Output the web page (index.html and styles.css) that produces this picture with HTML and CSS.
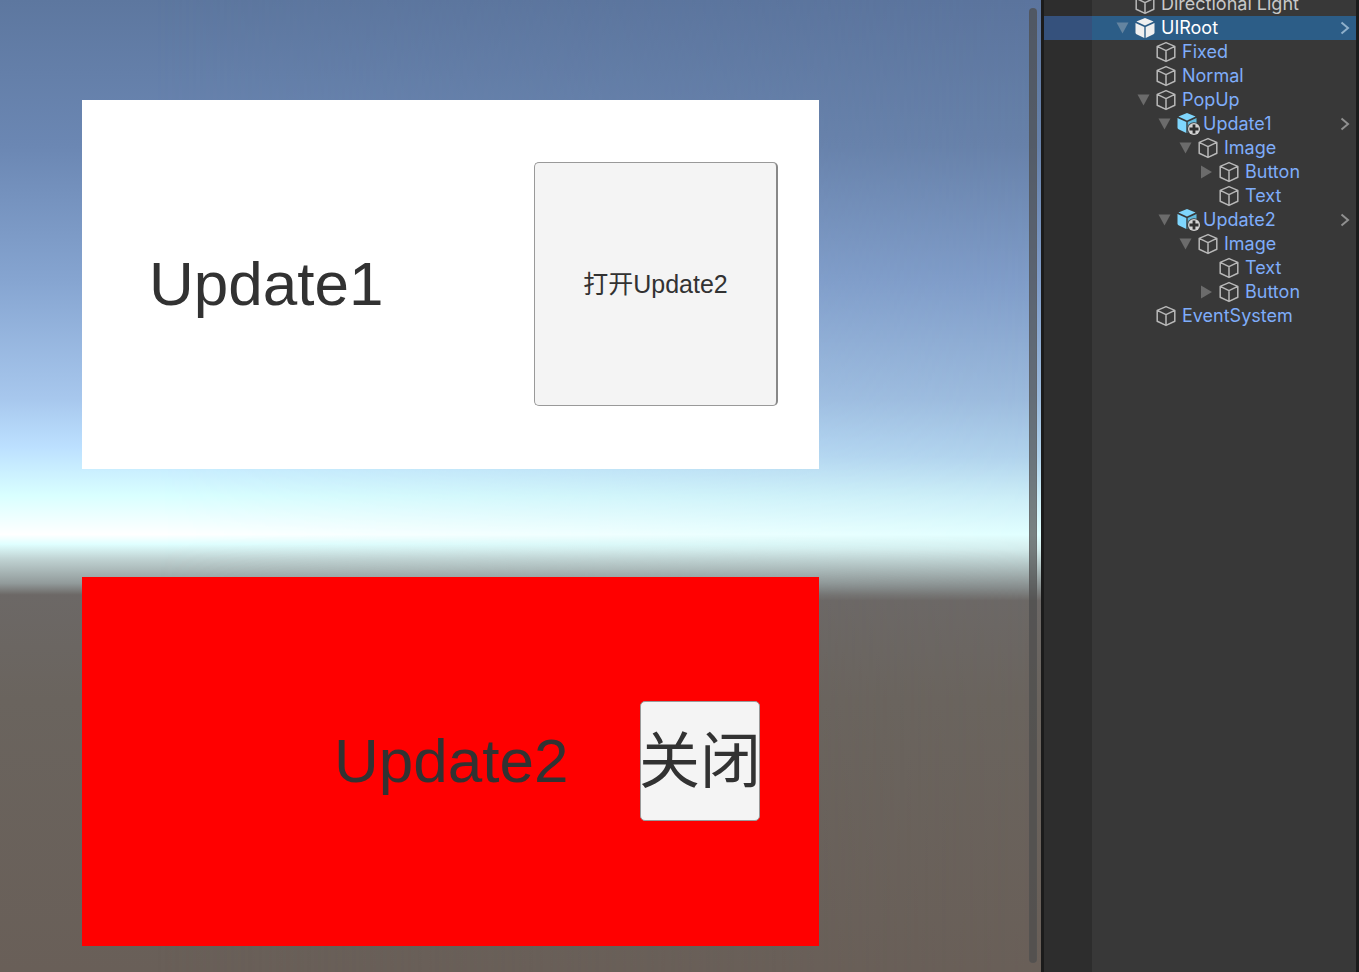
FILE: index.html
```
<!DOCTYPE html>
<html lang="zh-CN">
<head>
<meta charset="utf-8">
<title>UIRoot</title>
<link rel="stylesheet" href="styles.css">
</head>
<body>
<svg class="defs" aria-hidden="true">
  <symbol id="cube" viewBox="0 0 20 22"><path d="M10 1.6 18.8 5.4V16.2L10 20.4 1.2 16.2V5.4ZM1.2 5.4 10 9.6 18.8 5.4M10 9.6V20.4" fill="none" stroke="currentColor" stroke-width="1.5" stroke-linejoin="round"/></symbol>
  <symbol id="solid" viewBox="0 0 20 22"><path d="M10 1 18.6 4.6 10 8.5 1.4 4.6ZM.5 6.1 9.3 10V21L1.5 17.2Q.5 16.7.5 15.8ZM19.5 6.1 10.7 10V21L18.5 17.2Q19.5 16.7 19.5 15.8Z" fill="currentColor"/></symbol>
  <symbol id="prefab" viewBox="0 0 24 24"><path d="M10 1 18.6 4.6 10 8.5 1.4 4.6ZM.5 6.1 9.3 10V21L1.5 17.2Q.5 16.7.5 15.8Z" fill="#7fd6fd"/><path d="M19.5 6.1 10.7 10V21L18.5 17.2Q19.5 16.7 19.5 15.8Z" fill="#62b9dc"/><circle cx="17" cy="17" r="6.8" fill="#383838"/><circle cx="17" cy="17" r="6" fill="#d2d2d2"/><path d="M17 12.5v9M12.5 17h9" stroke="#303030" stroke-width="2.8"/></symbol>
  <symbol id="down" viewBox="0 0 12 12"><path d="M0 .5H12L6 11.5Z" fill="currentColor"/></symbol>
  <symbol id="right" viewBox="0 0 12 14"><path d="M.5.5 11.5 7 .5 13.5Z" fill="currentColor"/></symbol>
  <symbol id="chev" viewBox="0 0 10 14"><path d="M1.5 1.5 8 7 1.5 12.5" fill="none" stroke="currentColor" stroke-width="2"/></symbol>
</svg>
<div class="editor">
  <main class="scene">
    <section class="popup popup-one">
      <h1 class="title">Update1</h1>
      <button class="ui-button open">打开Update2</button>
    </section>
    <section class="popup popup-two">
      <h1 class="title">Update2</h1>
      <button class="ui-button close">关闭</button>
    </section>
    <div class="scroll"></div>
  </main>
  <nav class="hierarchy">
    <ul class="tree">
      <li class="row plain"><span class="slot"></span><svg class="icon"><use href="#cube"/></svg><span class="name">Directional Light</span></li>
      <li class="row selected"><button class="slot" aria-label="UIRoot"><svg class="down"><use href="#down"/></svg></button><svg class="icon"><use href="#solid"/></svg><span class="name">UIRoot</span><svg class="chev"><use href="#chev"/></svg></li>
      <li class="row l1"><span class="slot"></span><svg class="icon"><use href="#cube"/></svg><span class="name">Fixed</span></li>
      <li class="row l1"><span class="slot"></span><svg class="icon"><use href="#cube"/></svg><span class="name">Normal</span></li>
      <li class="row l1"><button class="slot" aria-label="PopUp"><svg class="down"><use href="#down"/></svg></button><svg class="icon"><use href="#cube"/></svg><span class="name">PopUp</span></li>
      <li class="row l2"><button class="slot" aria-label="Update1"><svg class="down"><use href="#down"/></svg></button><svg class="icon prefab"><use href="#prefab"/></svg><span class="name">Update1</span><svg class="chev"><use href="#chev"/></svg></li>
      <li class="row l3"><button class="slot" aria-label="Image"><svg class="down"><use href="#down"/></svg></button><svg class="icon"><use href="#cube"/></svg><span class="name">Image</span></li>
      <li class="row l4"><button class="slot" aria-label="Button"><svg class="right"><use href="#right"/></svg></button><svg class="icon"><use href="#cube"/></svg><span class="name">Button</span></li>
      <li class="row l4"><span class="slot"></span><svg class="icon"><use href="#cube"/></svg><span class="name">Text</span></li>
      <li class="row l2"><button class="slot" aria-label="Update2"><svg class="down"><use href="#down"/></svg></button><svg class="icon prefab"><use href="#prefab"/></svg><span class="name">Update2</span><svg class="chev"><use href="#chev"/></svg></li>
      <li class="row l3"><button class="slot" aria-label="Image"><svg class="down"><use href="#down"/></svg></button><svg class="icon"><use href="#cube"/></svg><span class="name">Image</span></li>
      <li class="row l4"><span class="slot"></span><svg class="icon"><use href="#cube"/></svg><span class="name">Text</span></li>
      <li class="row l4"><button class="slot" aria-label="Button"><svg class="right"><use href="#right"/></svg></button><svg class="icon"><use href="#cube"/></svg><span class="name">Button</span></li>
      <li class="row l1"><span class="slot"></span><svg class="icon"><use href="#cube"/></svg><span class="name">EventSystem</span></li>
    </ul>
  </nav>
</div>
</body>
</html>
```
FILE: styles.css
```
* { box-sizing: border-box; }
body { margin: 0; background: #1b1b1b; overflow: hidden; }
.defs { position: absolute; width: 0; height: 0; }
button { font: inherit; color: inherit; padding: 0; border: 0; background: none; }

.editor { display: flex; height: 100vh; }

.scene {
  position: relative;
  isolation: isolate;
  flex: 1;
  display: flex;
  flex-direction: column;
  gap: 108px;
  padding: 100px 222px 0 82px;
  background: linear-gradient(#5d779f 0, #6b87b3 15%, #86a5d1 29%, #a7c7ed 41%, #bce0ff 46%, #d9ffff 51%, #fff 55%, #dfffff 56%, #c0d3d3 57.5%, #929b9b 60%, #6c6866 61.2%, #6a645e 72%, #695f58 100%);
}
.scene::before {
  content: "";
  position: absolute;
  inset: 0;
  z-index: -1;
  background: linear-gradient(#5b749d 0, #6781a9 15%, #7f9cc8 29%, #9bbadc 41%, #b0d2ec 47%, #cdeff8 51.5%, #e0ffff 55%, #d3ecec 56.5%, #b0c1c1 58.3%, #858b8b 60.5%, #6c6866 61.8%, #6a645e 72%, #695f58 100%);
  -webkit-mask-image: linear-gradient(90deg, transparent 15%, #000);
  mask-image: linear-gradient(90deg, transparent 15%, #000);
}
.scroll {
  position: absolute;
  top: 8px;
  right: 4px;
  bottom: 9px;
  width: 8px;
  border: 1px solid rgba(85, 85, 85, .3);
  border-radius: 4px;
  background: rgba(76, 76, 76, .7);
}

.popup { display: flex; align-items: center; height: 369px; }
.popup-one { background: #fff; padding: 0 41px 2px 67px; }
.popup-two { background: #f00; padding: 0 59px 2px 252px; }
.title {
  margin: 0;
  color: #323232;
  font: 400 62px/72px "Liberation Sans", Arial, sans-serif;
}
.ui-button {
  display: flex;
  align-items: center;
  justify-content: center;
  margin-left: auto;
  color: #323232;
  background: #f4f4f4;
  border: 1px solid #999;
  border-radius: 5px;
  font-family: "Liberation Sans", "Noto Sans CJK SC", sans-serif;
  white-space: nowrap;
}
.open { width: 244px; height: 244px; padding-bottom: 3px; border-right: 2px solid #888; font-size: 25px; }
.close { width: 120px; height: 120px; padding-top: 2px; font-size: 61px; line-height: 72px; }

.hierarchy {
  width: 318px;
  border: solid #1b1b1b;
  border-width: 0 3px;
  background: linear-gradient(90deg, #2d2d2d 48px, #383838 48px);
}
.tree {
  list-style: none;
  margin: -8px 0 0;
  padding: 0;
  color: #7fadfa;
  font: 400 18px/22px Inter, sans-serif;
}
.row { display: flex; align-items: center; height: 24px; padding: 0 6px 0 72px; }
.l1 { padding-left: 93px; }
.l2 { padding-left: 114px; }
.l3 { padding-left: 135px; }
.l4 { padding-left: 156px; }
.plain { color: #c8c8c8; }
.selected { color: #fff; background: linear-gradient(90deg, #35517c 48px, #2c5d87 48px); }
.slot { display: flex; width: 19px; color: #6b6b6b; }
.selected .slot { color: #6484a0; }
.down { width: 13px; height: 12px; }
.right { width: 13px; height: 14px; }
.icon { width: 20px; height: 22px; color: #b8b8b8; }
.selected .icon { color: #f0f0f0; }
.prefab { width: 24px; height: 24px; margin-right: -4px; }
.name { margin-left: 6px; padding-bottom: 1px; }
.chev { width: 10px; height: 14px; margin-left: auto; color: #909090; }
.selected .chev { color: #8fb0cb; }
```
